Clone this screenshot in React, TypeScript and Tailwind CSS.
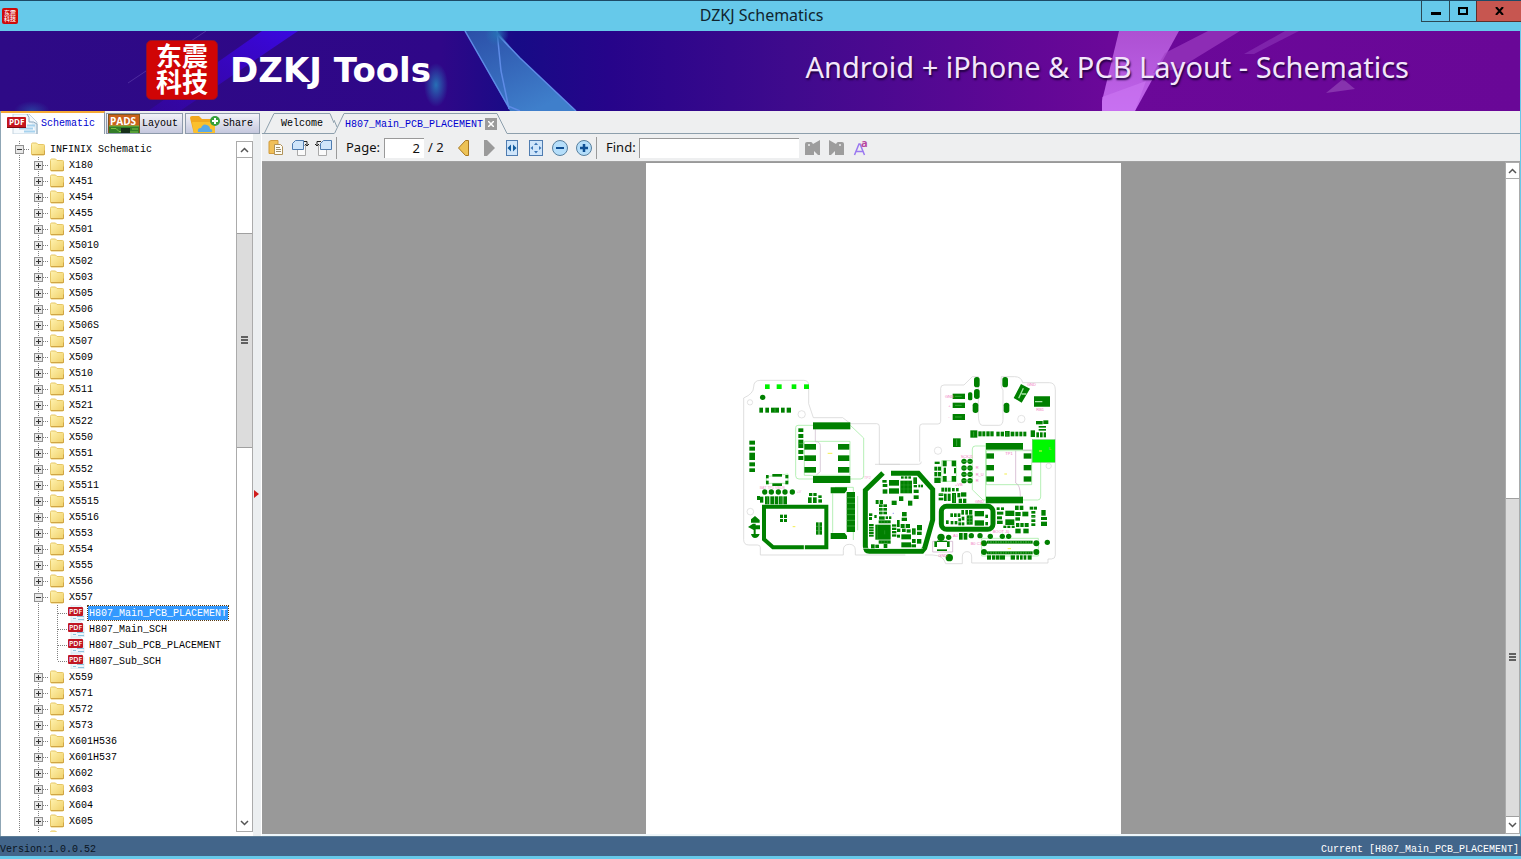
import { useState } from "react";
import type { ReactNode } from "react";

const FOLDERS_BEFORE = [
  "X180", "X451", "X454", "X455", "X501", "X5010", "X502", "X503", "X505", "X506", "X506S",
  "X507", "X509", "X510", "X511", "X521", "X522", "X550", "X551", "X552", "X5511", "X5515",
  "X5516", "X553", "X554", "X555", "X556",
];
const FILES = ["H807_Main_PCB_PLACEMENT", "H807_Main_SCH", "H807_Sub_PCB_PLACEMENT", "H807_Sub_SCH"];
const FOLDERS_AFTER = [
  "X559", "X571", "X572", "X573", "X601H536", "X601H537", "X602", "X603", "X604", "X605",
];

const mono = "font-['Liberation_Mono','Noto_Sans_CJK_SC',monospace] text-[10px]";

/* ---------- small icons ---------- */

function FolderIcon() {
  return (
    <svg width="14" height="14" viewBox="0 0 14 14" className="shrink-0">
      <defs>
        <linearGradient id="folder" x1="0" y1="0" x2="1" y2="1">
          <stop offset="0" stopColor="#fff3b0" />
          <stop offset="1" stopColor="#f0d069" />
        </linearGradient>
      </defs>
      <path d="M.5 2.500q0-1.500 1-1.500h4l1.500 1.500h5.500q1 0 1 1v8.500q0 1-1 1h-11q-1 0-1-1z" fill="url(#folder)" stroke="#e6c766" />
      <path d="M1 12.500h12.500v-4" fill="none" stroke="#d0a545" />
    </svg>
  );
}

function PdfIcon({ big = false }: { big?: boolean }) {
  return (
    <svg width={big ? 34 : 17} height={big ? 20 : 16} viewBox={big ? "0 0 34 20" : "0 0 17 16"} className="shrink-0">
      {big ? (
        <>
          <path d="M6 0h16l8 8v12H6z" fill="#f4f9fd" stroke="#c3d3df" />
          <path d="M20 0q3 3 2 8 5-1 8 2v10" fill="#dfebf4" stroke="#8fa9bd" />
          <path d="M12 14.500h14M17 17.500h11M20 11.500h8" stroke="#a6d2ee" strokeWidth="2" />
          <rect x="0" y="3" width="19" height="11" rx="1" fill="#c4141c" />
          <path d="M0 13.500h19" stroke="#7c0a10" />
          <text x="2" y="11" fontSize="8" fontWeight="700" fill="#fff" fontFamily="Open Sans, sans-serif">PDF</text>
        </>
      ) : (
        <>
          <path d="M3 0h9l4 4v12H3z" fill="#edf6fb" stroke="#cfdfe8" strokeWidth=".6" />
          <path d="M5 13.500h3M10 14.500h6M9 11.500h7" stroke="#8cc4de" />
          <rect x="0" y="2" width="15" height="9" rx="1" fill="#c01622" />
          <text x="1" y="9" fontSize="7" fontWeight="600" fill="#fff" fontFamily="Open Sans, sans-serif">PDF</text>
        </>
      )}
    </svg>
  );
}

function PadsIcon() {
  return (
    <svg width="32" height="20" viewBox="0 0 32 20" className="shrink-0">
      <rect width="32" height="20" fill="#fff" />
      <rect x=".5" y=".5" width="31" height="20" fill="#c9611a" stroke="#7f5520" />
      <rect x="1" y="12" width="30" height="8" fill="#327c28" />
      <path d="M1 12h30M3 14.500h5l3 3h3M24 15h6M19 18h11" stroke="#7bc142" fill="none" />
      <rect x="13" y="14" width="9" height="5" fill="#16301a" />
      <text x="2" y="11" fontSize="10" fontWeight="700" fill="#fff" fontFamily="Open Sans, sans-serif">PADS</text>
    </svg>
  );
}

function ShareIcon() {
  return (
    <svg width="34" height="20" viewBox="0 0 34 20" className="shrink-0">
      <path d="M1 4q0-2 2-2h7l3 3h10q2 0 2 2v13H5z" fill="#f2a81e" />
      <path d="M3 8h23v12H5z" fill="#fbc02d" />
      <path d="M9 18q-1-4 3-4 2-5 6-3 3 1 3 4 3 0 2 3z" fill="#5aa9e6" />
      <circle cx="26" cy="7" r="5" fill="#35a03a" />
      <path d="M26 4v6M23 7h6" stroke="#fff" strokeWidth="2" />
    </svg>
  );
}

function Seal({ small = false }: { small?: boolean }) {
  if (small) {
    return (
      <svg width="16" height="16" viewBox="0 0 16 16" className="overflow-visible">
        <rect width="16" height="16" rx="2" fill="#cf0a0a" />
        <g fontSize="6" fontWeight="500" fill="#fff" fontFamily="Noto Sans CJK SC, sans-serif">
          <text x="2" y="7">东震</text>
          <text x="2" y="13">科技</text>
        </g>
      </svg>
    );
  }
  return (
    <svg width="72" height="60" viewBox="0 0 72 60" className="shrink-0 overflow-visible">
      <rect x=".5" y=".5" width="71" height="59" rx="5" fill="#d00505" stroke="#8c1030" />
      <g fontSize="26" fontWeight="700" fill="#fff" fontFamily="Noto Sans CJK SC, sans-serif">
        <text x="10" y="26">东震</text>
        <text x="10" y="52">科技</text>
      </g>
    </svg>
  );
}

function Chevron({ up = false }: { up?: boolean }) {
  return (
    <svg width="9" height="6" viewBox="0 0 9 6">
      <path d={up ? "M1 5l3.500-3.500L8 5" : "M1 1l3.500 3.500L8 1"} fill="none" stroke="#555" strokeWidth="1.500" />
    </svg>
  );
}

/* ---------- banner ---------- */

function BannerArt() {
  return (
    <svg className="absolute inset-0 h-full w-full" viewBox="0 0 1520 80" preserveAspectRatio="none">
      <defs>
        <linearGradient id="bg">
          <stop offset="0" stopColor="#2e0a86" />
          <stop offset=".29" stopColor="#2f0788" />
          <stop offset=".34" stopColor="#170b86" />
          <stop offset=".4" stopColor="#26048a" />
          <stop offset=".52" stopColor="#3f0a8d" />
          <stop offset=".68" stopColor="#620796" />
          <stop offset=".73" stopColor="#6b0899" />
          <stop offset="1" stopColor="#690797" />
        </linearGradient>
        <linearGradient id="beam" x1="0" y1="1" x2="1" y2="0">
          <stop offset="0" stopColor="#3c00c8" stopOpacity=".3" />
          <stop offset="1" stopColor="#3a08e0" />
        </linearGradient>
        <linearGradient id="prism" x1="0" y1="0" x2=".6" y2="1">
          <stop offset="0" stopColor="#2b4fa8" />
          <stop offset="1" stopColor="#3f7fcb" />
        </linearGradient>
        <linearGradient id="pink" x1="0" y1="0" x2="0" y2="1">
          <stop offset="0" stopColor="#ad50d2" />
          <stop offset="1" stopColor="#c065ec" />
        </linearGradient>
        <radialGradient id="glow">
          <stop offset="0" stopColor="#276fb5" />
          <stop offset="1" stopColor="#276fb5" stopOpacity="0" />
        </radialGradient>
      </defs>
      <rect width="1520" height="80" fill="url(#bg)" />
      <path d="M148 80L262 0h36L180 80z" fill="url(#beam)" />
      <path d="M128 52L206 0" stroke="#6e4fb8" opacity=".5" />
      <ellipse cx="436" cy="54" rx="12" ry="22" fill="url(#glow)" />
      <ellipse cx="32" cy="80" rx="18" ry="10" fill="url(#glow)" opacity=".5" />
      <path d="M465 0h32l23 27 56 53h-66z" fill="url(#prism)" />
      <path d="M465 0l43 75 12 5M497 0l4 40 8 38M497 3l23 24 56 53" fill="none" stroke="#5e8be6" strokeWidth="1.500" />
      <circle cx="497" cy="3" r="12" fill="url(#glow)" />
      <path d="M1119 0h60l-44 80h-33v-10z" fill="url(#pink)" />
      <path d="M1102 66l44-16-11 30h-33z" fill="#d07cf5" opacity=".5" />
      <path d="M1208 0h32l-62 38-25 4 12-20z" fill="#a040c4" opacity=".65" />
      <path d="M1285 0h14l-45 23-10 0z" fill="#8c35b8" opacity=".6" />
      <path d="M1343 48l12 10-29 4z" fill="#8733ae" />
    </svg>
  );
}

/* ---------- tree ---------- */

function Guide({ half = false, branch = false, box }: { half?: boolean; branch?: boolean; box?: "+" | "-" }) {
  return (
    <svg width="19" height="16" viewBox="0 0 19 16" className="block shrink-0">
      <path d={half ? "M9.500 0V8" : "M9.500 0V16"} stroke="#808080" strokeDasharray="1 1" />
      {(branch || box) && <path d="M10 8.500h9" stroke="#808080" strokeDasharray="1 1" />}
      {box && (
        <>
          <rect x="5.500" y="4.500" width="8" height="8" fill="#e8e8e8" stroke="#919191" />
          <path d={box === "+" ? "M7 8.500h5M9.500 6v5" : "M7 8.500h5"} stroke="#333" />
        </>
      )}
    </svg>
  );
}

function Row({ name, depth, open = false, onToggle }: { name: string; depth: number; open?: boolean; onToggle?: () => void }) {
  return (
    <li className="flex h-4 items-center">
      {depth > 0 && <Guide />}
      <button type="button" aria-label="Toggle folder" onClick={onToggle} className="shrink-0">
        <Guide box={open ? "-" : "+"} />
      </button>
      <span className="flex w-[19px] shrink-0 pl-[2px]">
        <FolderIcon />
      </span>
      {name && <button type="button" className="px-[2px] pt-[2px] leading-[14px] whitespace-nowrap">{name}</button>}
    </li>
  );
}

function Tree({ selected, onSelect }: { selected: string; onSelect: (name: string) => void }) {
  const [open, setOpen] = useState(true);
  return (
    <ul className={`min-w-0 flex-1 overflow-hidden pl-[9px] text-black ${mono}`}>
      <Row name="INFINIX Schematic" depth={0} open />
      {FOLDERS_BEFORE.map((name) => (
        <Row key={name} name={name} depth={1} />
      ))}
      <Row name="X557" depth={1} open={open} onToggle={() => setOpen(!open)} />
      {open &&
        FILES.map((name, i) => (
          <li key={name} className="flex h-4 items-center">
            <Guide />
            <Guide />
            <Guide branch half={i === FILES.length - 1} />
            <span className="flex w-5 shrink-0 pl-px">
              <PdfIcon />
            </span>
            <button
              type="button"
              onClick={() => onSelect(name)}
              className={
                name === selected
                  ? "h-4 border border-dotted border-[#5a3a10] bg-[#3399ff] bg-clip-padding px-px pt-px leading-[13px] whitespace-nowrap text-white"
                  : "px-[2px] pt-[2px] leading-[14px] whitespace-nowrap"
              }
            >
              {name}
            </button>
          </li>
        ))}
      {FOLDERS_AFTER.map((name) => (
        <Row key={name} name={name} depth={1} />
      ))}
      <Row name="" depth={1} />
    </ul>
  );
}

/* above / thumb / below share the track as flex weights */
function ScrollBar({ above, thumb, below }: { above: number; thumb: number; below: number }) {
  return (
    <div className="flex w-full flex-col border border-[#ababab] bg-white">
      <button type="button" aria-label="Scroll up" className="flex h-4 shrink-0 items-center justify-center border-b border-[#ababab]">
        <Chevron up />
      </button>
      <div style={{ flex: `${above} 1 0px` }} />
      <div
        className="flex flex-col items-center justify-center gap-px border-y border-[#a0a0a0] bg-[#dcdcdc]"
        style={{ flex: `${thumb} 1 0px` }}
      >
        <span className="h-[2px] w-[7px] bg-[#606060]" />
        <span className="h-[2px] w-[7px] bg-[#606060]" />
        <span className="h-[2px] w-[7px] bg-[#606060]" />
      </div>
      <div style={{ flex: `${below} 1 0px` }} />
      <button type="button" aria-label="Scroll down" className="flex h-4 shrink-0 items-center justify-center">
        <Chevron />
      </button>
    </div>
  );
}

/* ---------- board drawing ---------- */

type Box = [number, number, number, number];

const LEFT_PADS: Box[] = [
  [73, 113, 11, 15], [91, 113, 11, 15], [108, 113, 24, 15], [138, 113, 11, 15], [155, 113, 13, 15],
  [43, 212, 17, 12], [43, 230, 17, 12], [43, 248, 17, 22], [43, 277, 17, 12], [43, 295, 17, 11],
  [190, 175, 15, 11], [190, 192, 15, 12], [190, 209, 15, 25], [190, 240, 15, 12], [190, 258, 15, 12],
  [208, 222, 35, 17], [208, 256, 35, 17], [208, 291, 35, 17],
  [309, 222, 34, 17], [309, 256, 34, 17], [309, 291, 34, 17],
  [234, 157, 112, 21], [234, 318, 112, 21],
  [112, 312, 29, 8], [112, 340, 29, 8], [93, 315, 8, 10], [93, 332, 8, 11], [151, 315, 9, 10], [151, 332, 9, 11],
  [335, 366, 25, 120],
  [66, 378, 9, 12], [75, 380, 10, 18], [90, 379, 13, 24], [106, 379, 11, 24], [119, 379, 11, 24], [132, 379, 11, 24], [145, 379, 11, 24],
  [222, 369, 10, 9], [235, 369, 10, 9], [219, 382, 11, 17], [234, 382, 11, 17], [250, 376, 10, 8], [250, 388, 11, 10],
  [135, 434, 9, 10], [147, 434, 9, 10], [135, 447, 9, 9], [147, 447, 9, 9],
  [243, 457, 8, 37], [253, 457, 8, 37],
];

const RIGHT_PADS: Box[] = [
  [173, 71, 37, 16], [173, 98, 37, 16], [173, 132, 37, 18],
  [273, 219, 111, 20], [273, 380, 111, 20],
  [274, 250, 23, 16], [274, 285, 23, 16], [274, 319, 23, 16],
  [386, 250, 23, 16], [386, 285, 23, 16], [386, 319, 23, 16],
  [174, 205, 23, 26],
  [226, 181, 21, 22], [250, 184, 10, 15], [262, 184, 9, 15], [274, 184, 10, 15], [286, 184, 10, 15],
  [304, 185, 10, 14], [317, 185, 10, 14], [330, 183, 14, 17], [347, 185, 11, 14], [361, 185, 9, 14], [373, 185, 9, 14], [385, 185, 9, 14], [407, 181, 13, 20],
  [424, 187, 8, 15], [435, 187, 8, 15], [446, 187, 7, 15], [431, 168, 22, 5], [431, 177, 22, 5],
  [423, 153, 20, 10], [445, 151, 15, 11],
  [119, 275, 15, 7], [118, 290, 9, 12], [129, 290, 9, 12], [118, 306, 9, 13], [129, 306, 9, 13], [118, 323, 19, 16],
  [143, 272, 12, 17], [170, 272, 13, 17], [143, 318, 12, 17], [170, 318, 13, 17], [146, 293, 7, 18], [177, 294, 6, 16],
  [139, 353, 8, 12], [149, 353, 8, 12], [159, 353, 8, 12], [171, 354, 8, 10], [183, 354, 8, 10],
  [131, 370, 14, 8], [131, 383, 14, 8], [147, 371, 8, 22], [158, 371, 9, 22], [171, 369, 12, 30], [187, 369, 9, 13], [198, 367, 16, 13], [191, 386, 10, 13], [204, 386, 10, 13],
  [239, 423, 28, 16], [239, 451, 28, 16], [166, 430, 8, 11], [177, 430, 8, 11], [188, 430, 8, 11], [199, 420, 8, 14], [211, 420, 8, 14], [222, 420, 10, 14],
  [153, 451, 8, 11], [167, 453, 8, 10], [179, 453, 8, 10], [190, 445, 8, 9], [200, 440, 8, 11], [190, 457, 8, 9], [200, 457, 8, 9], [215, 436, 18, 28], [271, 434, 8, 10], [271, 456, 8, 10],
  [305, 412, 9, 8], [318, 412, 9, 8], [306, 425, 19, 9], [306, 439, 15, 9], [306, 452, 17, 10],
  [331, 422, 27, 16], [331, 448, 27, 17], [325, 467, 9, 7], [337, 467, 9, 7], [350, 467, 9, 7],
  [360, 407, 11, 13], [374, 407, 11, 13], [361, 426, 16, 12], [382, 425, 18, 14], [361, 442, 14, 10], [363, 459, 10, 12], [376, 459, 10, 12], [389, 459, 12, 12], [361, 476, 16, 14], [385, 476, 16, 14],
  [404, 410, 10, 9], [416, 410, 10, 9], [409, 423, 12, 8], [409, 435, 12, 8], [409, 448, 12, 8], [409, 460, 12, 8], [439, 420, 13, 17], [438, 441, 18, 9], [438, 455, 18, 13],
  [192, 489, 11, 20], [206, 489, 11, 20],
  [276, 512, 137, 9], [276, 544, 137, 9],
  [118, 514, 8, 17], [156, 514, 8, 17], [126, 512, 30, 4], [126, 538, 30, 5],
  [276, 556, 12, 13], [291, 556, 10, 13], [303, 556, 10, 13], [314, 556, 16, 13], [347, 556, 13, 13], [364, 556, 8, 13], [375, 556, 8, 13], [386, 556, 8, 13], [398, 556, 12, 13],
];

const CORE_PADS: Box[] = [
  [61, 45, 13, 8], [62, 57, 14, 9], [62, 73, 14, 13], [81, 45, 30, 17], [81, 70, 30, 16],
  [115, 47, 35, 38], [117, 34, 8, 7], [128, 34, 8, 7], [139, 34, 8, 7], [154, 37, 11, 20], [155, 60, 10, 7], [169, 59, 6, 8], [177, 59, 6, 8], [155, 74, 15, 10], [155, 91, 15, 11],
  [111, 94, 13, 14], [89, 107, 15, 13], [138, 107, 13, 15], [41, 105, 9, 12], [53, 105, 10, 12],
  [51, 118, 11, 8], [64, 118, 11, 8], [51, 129, 11, 8], [64, 129, 11, 8], [51, 140, 11, 8], [64, 140, 11, 8], [51, 154, 17, 10], [71, 154, 7, 8], [81, 154, 7, 8],
  [21, 145, 10, 8], [21, 156, 9, 9], [37, 150, 7, 9], [120, 141, 14, 13], [119, 158, 16, 10],
  [40, 179, 46, 45], [21, 177, 14, 6], [21, 185, 14, 6], [21, 193, 14, 6], [21, 201, 14, 6], [21, 209, 14, 6],
  [50, 166, 36, 9], [50, 226, 36, 10], [90, 178, 13, 7], [90, 188, 13, 7], [90, 198, 13, 7], [90, 208, 13, 7],
  [105, 165, 8, 21], [116, 177, 12, 12], [131, 177, 13, 12], [105, 191, 10, 10], [120, 191, 11, 10], [134, 193, 12, 10],
  [118, 208, 29, 15], [118, 232, 29, 15], [150, 190, 11, 19], [165, 180, 15, 16], [165, 200, 14, 10], [150, 222, 11, 12], [165, 222, 13, 14], [148, 238, 14, 9], [105, 209, 9, 9],
  [27, 238, 11, 12], [40, 239, 11, 10], [65, 237, 11, 12],
];

function Pads({ boxes }: { boxes: Box[] }) {
  return (
    <>
      {boxes.map(([x, y, w, h], i) => (
        <rect key={i} x={x} y={y} width={w} height={h} />
      ))}
    </>
  );
}

const seam = { stroke: "#52b852", strokeWidth: 2, fill: "none" };

function Board() {
  return (
    <svg className="block w-full" viewBox="646 370 475 200">
      {/* left half */}
      <g transform="translate(735 370) scale(.33333)">
        <path
          d="M76 31h130q15 0 15 15v55l14 42h88l24 18h78q8 0 8 8v114h62M76 31q-20 0-20 20t-30 33v425q0 16 16 16h26q8 0 8 8v22h249v-14q0-18 18-18t18 18v14h150"
          fill="none" stroke="#cfcfcf" strokeWidth="2"
        />
        <g fill="none" stroke="#d4d4d4" strokeWidth="2">
          <circle cx="45" cy="97" r="8" />
          <circle cx="200" cy="133" r="11" />
          <circle cx="46" cy="425" r="10" />
        </g>
        <g fill="none" stroke="#93e893" strokeWidth="2">
          <path d="M234 166h-45q-7 0-7 7v144q0 10 10 10h42M346 166l40 38v113q0 10-10 10h-30" />
          <path d="M208 214h137v102H208zM293 370v118M300 352h55v158M368 378v103M94 320v20h65v-28z" />
        </g>
        <path d="M241 178v37q15 0 15 12v78l-12 10" fill="none" stroke="#c9b6c9" strokeWidth="2" />
        <g fill="#00f000">
          <rect x="90" y="43" width="14" height="14" />
          <rect x="125" y="43" width="15" height="14" />
          <rect x="170" y="43" width="14" height="14" />
          <rect x="207" y="43" width="15" height="14" />
        </g>
        <g fill="#008000">
          <circle cx="83" cy="82" r="8" />
          <Pads boxes={LEFT_PADS} />
          <path d="M287 352h49v9l-7 9h-42zM287 489h42l7 9v9h-49z" />
          {[89, 109, 130, 150, 172].map((cx) => (
            <circle key={cx} cx={cx} cy="366" r="8" />
          ))}
          <path d="M48 448l12-10 14 12v8H48zM39 471l15-10h8v5h13v12H62v14h12q-4 12-14 12-9 0-12-12h8v-12z" />
        </g>
        <path d="M87 410h187v122H114l-27-24z" fill="none" stroke="#008000" strokeWidth="12" />
        <path d="M208 522v18" stroke="#fff" strokeWidth="3" />
        <path d="M190 221h15M335 383h25M335 400h25M335 417h25M335 434h25M335 451h25M335 468h25M243 469h18M243 482h18M97 380v22M138 380v22M120 115v12" {...seam} />
        <g fill="#f2a2cf" fontSize="11" fontFamily="Liberation Sans, sans-serif">
          <text x="74" y="357">BAT TP1 VBUS</text>
          <text x="185" y="368">+V</text>
          <text x="387" y="327">TP2</text>
        </g>
        <path d="M278 250h14M173 470h8" stroke="#f3ee4e" strokeWidth="3" />
      </g>

      {/* right half */}
      <g transform="translate(895 370) scale(.33333)">
        <path
          d="M-60 283H71q8 0 8-8M74 275V170q0-8 8-8h47q8 0 8-8V55q0-10 10-10h60l25-25h18v112q0 34 12 34h50q12 0 12-18V60q-8-8-5-40h40q20 0 24 18h80q18 0 18 22v495q0 12-12 12h-10v12H230v-18q0-16-14-16t-14 16v20h-50q-6-25-40-26H90"
          fill="none" stroke="#cfcfcf" strokeWidth="2"
        />
        <g fill="none" stroke="#d4d4d4" strokeWidth="2">
          <circle cx="379" cy="147" r="11" />
          <circle cx="129" cy="242" r="11" />
          <circle cx="461" cy="288" r="8" />
        </g>
        <g fill="none" stroke="#93e893" strokeWidth="2">
          <path d="M273 228h-32q-9 0-9 9v122l32 31h9M384 390h44q9 0 9-9V275M274 242h136v102H274zM272 219v181" />
          <path d="M260 505h170v53H260zM140 272h44v62h-44z" />
        </g>
        <path d="M362 242v97q14 5 14 40M383 240h28M113 514h60v32h-60z" fill="none" stroke="#c9a6c4" strokeWidth="2" />
        <g fill="#008000">
          <Pads boxes={RIGHT_PADS} />
          <rect x="237" y="21" width="17" height="31" rx="8" />
          <rect x="237" y="57" width="17" height="30" rx="8" />
          <rect x="233" y="98" width="17" height="31" rx="8" />
          <rect x="322" y="21" width="17" height="31" rx="8" />
          <rect x="326" y="98" width="17" height="31" rx="8" />
          <rect x="219" y="67" width="13" height="24" rx="5" />
          <path d="M378 42l27 14-25 42-24-14zM417 79h48v31h-48z" />
          {[207, 225].map((cx) => [274, 294, 313, 332].map((cy) => <circle key={cx + "-" + cy} cx={cx} cy={cy} r="8" />))}
          <circle cx="138" cy="502" r="11" />
          <circle cx="161" cy="502" r="8" />
          <circle cx="229" cy="497" r="8" />
          <circle cx="255" cy="497" r="8" />
          <circle cx="286" cy="499" r="8" />
          <circle cx="322" cy="499" r="8" />
          <circle cx="341" cy="499" r="8" />
          <circle cx="457" cy="517" r="8" />
          <circle cx="163" cy="563" r="11" />
          <circle cx="267" cy="520" r="9" />
          <circle cx="267" cy="546" r="9" />
          <circle cx="424" cy="520" r="9" />
          <circle cx="424" cy="546" r="9" />
        </g>
        <rect x="139" y="409" width="155" height="69" rx="16" fill="none" stroke="#008000" strokeWidth="15" />
        <rect x="412" y="209" width="68" height="68" fill="#00f800" stroke="#49a349" />
        <path d="M371 85l14-30M380 72h14M420 95h22" stroke="#a5e6a5" strokeWidth="4" />
        <path d="M180 79h20M180 106h20M180 141h20M185 208v20M236 185v15M215 446h18M215 455h18M224 436v28M131 374h14M178 372v25M336 185v14M409 439h12M202 274h28M202 294h28M202 313h28M202 332h28" {...seam} />
        <path d="M280 516h130M280 548h130" stroke="#6fc06f" strokeWidth="7" strokeDasharray="1 4" />
        <g fill="#f07cc0" fontSize="12" fontFamily="Liberation Sans, sans-serif">
          <text x="150" y="84">GND</text>
          <text x="160" y="110">+</text>
          <text x="160" y="143">-</text>
          <text x="396" y="48">GND</text>
          <text x="424" y="122">RB1</text>
          <text x="197" y="263">SCKJ1</text>
          <text x="242" y="298">R</text>
          <text x="242" y="318">R_U</text>
          <text x="242" y="336">R</text>
          <text x="240" y="398">GND</text>
          <text x="331" y="255">TP1</text>
          <text x="180" y="348">+VB</text>
          <text x="174" y="501">A0</text>
          <text x="293" y="490">BOOT J0</text>
          <text x="130" y="560">GND</text>
          <text x="227" y="525">B0 C1</text>
          <text x="462" y="240">L</text>
        </g>
        <g fill="none" stroke="#f3ee4e" strokeWidth="3">
          <path d="M328 312h8M338 536h10M432 243h9" />
        </g>
      </g>

      {/* shielded core */}
      <g transform="translate(862 465) scale(.33333)">
        <path d="M63 24L10 76v167q0 16 12 16h158l8-10 24-84V73l-43-48H87" fill="none" stroke="#008000" strokeWidth="15" />
        <path d="M2 250h180" stroke="#fff" strokeWidth="2" />
        <g fill="#008000">
          <Pads boxes={CORE_PADS} />
        </g>
        <path d="M126 48v36M138 48v36M115 60h35M115 72h35M57 119v36M46 180v46M58 167v8M67 167v8M76 167v8M58 227v9M67 227v9M76 227v9M159 40v16M155 194v13M68 196v12" {...seam} strokeWidth="1" />
        <path d="M92 145h4" stroke="#9d9df0" strokeWidth="3" />
      </g>
    </svg>
  );
}

/* ---------- toolbar ---------- */

function ToolButton({ label, children }: { label: string; children: ReactNode }) {
  return (
    <button type="button" aria-label={label} className="flex h-6 w-6 shrink-0 items-center justify-center">
      <svg width="18" height="18" viewBox="0 0 18 18" className="overflow-visible">{children}</svg>
    </button>
  );
}

const sheet = { fill: "#cfe5fa", stroke: "#4f7cb0" };

function Toolbar() {
  const [page, setPage] = useState("2");
  const [find, setFind] = useState("");
  return (
    <div className="flex h-7 shrink-0 items-center border-b border-[#a0a0a0] bg-[#eeeff0] pl-[2px] font-['Noto_Sans','Open_Sans',sans-serif] text-[13px] text-[#111]">
      <ToolButton label="Copy">
        <path d="M2 2.500l2-1h7v13H2z" fill="#f0bf58" stroke="#d19b3d" />
        <path d="M7.500 5.500h6l2 2v8h-8z" fill="#fffdf5" stroke="#b09258" />
        <path d="M9 8.500h4M9 10.500h5M9 12.500h5" stroke="#9d9070" />
      </ToolButton>
      <ToolButton label="Rotate right">
        <path d="M6.500 6.500h8v10h-8z" fill="#fafafa" stroke="#aaa" />
        <path d="M4.500 1.500h8v9h-11v-6z" {...sheet} />
        <path d="M13 2.500h3v4M14 5l2 2 2-2" fill="none" stroke="#222" />
      </ToolButton>
      <ToolButton label="Rotate left">
        <path d="M3.500 6.500h8v10h-8z" fill="#fafafa" stroke="#aaa" />
        <path d="M8.500 1.500h8v9h-11v-6z" {...sheet} />
        <path d="M6 2.500H2v4M0 5l2 2 2-2" fill="none" stroke="#222" />
      </ToolButton>
      <span className="h-[22px] w-px shrink-0 bg-[#9a9a9a]" />
      <label htmlFor="page" className="ml-[9px] w-[38px] shrink-0">Page:</label>
      <input
        id="page"
        value={page}
        onChange={(e) => setPage(e.target.value)}
        className="h-5 w-10 border-t border-l border-[#999] bg-white pr-1 text-right outline-none"
      />
      <span className="ml-1 w-6 shrink-0 whitespace-nowrap">/ 2</span>
      <ToolButton label="Previous page">
        <path d="M13.500 1.500v15h-3L3.500 9l7-7.500z" fill="#edc255" stroke="#a87820" />
      </ToolButton>
      <ToolButton label="Next page">
        <path d="M5 1h3l8 8-8 8H5z" fill="#9a9a9a" />
      </ToolButton>
      <ToolButton label="Fit width">
        <rect x="3.500" y="1.500" width="11" height="15" {...sheet} />
        <path d="M8 5.500v7L4.500 9zM10 5.500v7L13.500 9z" fill="#125c9e" />
      </ToolButton>
      <ToolButton label="Fit page">
        <rect x="2.500" y="1.500" width="13" height="15" {...sheet} />
        <path d="M7 6l2-2.500L11 6zM7 12l2 2.500 2-2.500zM6 7L3.500 9 6 11zM12 7l2.500 2-2.500 2z" fill="#3c76b6" />
      </ToolButton>
      <ToolButton label="Zoom out">
        <circle cx="9" cy="9" r="7.500" fill="#b5defa" stroke="#57809f" />
        <path d="M5 9h8" stroke="#0e4f94" strokeWidth="2" />
      </ToolButton>
      <ToolButton label="Zoom in">
        <circle cx="9" cy="9" r="7.500" fill="#b5defa" stroke="#57809f" />
        <path d="M5 9h8M9 5v8" stroke="#0e4f94" strokeWidth="2.500" />
      </ToolButton>
      <span className="h-[22px] w-px shrink-0 bg-[#9a9a9a]" />
      <label htmlFor="find" className="ml-[9px] w-[33px] shrink-0">Find:</label>
      <input
        id="find"
        value={find}
        onChange={(e) => setFind(e.target.value)}
        className="h-5 w-40 border-t border-l border-[#999] bg-white px-1 outline-none"
      />
      <div className="flex gap-px pl-px">
        <ToolButton label="Find previous">
          <path d="M2 5q0-2 2-2h4q1 0 2 2l7-4v15h-2l-4-4v4H2z" fill="#9d9d9d" />
          <circle cx="6" cy="6" r="1" fill="#eee" />
        </ToolButton>
        <ToolButton label="Find next">
          <path d="M16 5q0-2-2-2h-4q-1 0-2 2L1 1v15h2l4-4v4h9z" fill="#9d9d9d" />
          <circle cx="12" cy="6" r="1" fill="#eee" />
        </ToolButton>
        <ToolButton label="Match case">
          <path d="M1.500 16L6 5h1l4.500 11M3 12.500h7" fill="none" stroke="#9a78f0" strokeWidth="1.500" />
          <text x="8" y="8" fontSize="11" fontWeight="700" fill="#b8459f" fontFamily="Open Sans, sans-serif">a</text>
        </ToolButton>
      </div>
    </div>
  );
}

export default function App() {
  const [selected, setSelected] = useState(FILES[0]);

  return (
    <div className="flex h-screen flex-col overflow-hidden border-t border-[#1d4a66] bg-[#66c9ea]">
      {/* title bar */}
      <header className="flex h-[30px] shrink-0 items-center">
        <div className="flex flex-1 pl-[2px]">
          <Seal small />
        </div>
        <h1 className="pb-[2px] font-['Noto_Sans','Open_Sans',sans-serif] text-base text-[#10242e]">DZKJ Schematics</h1>
        <div className="flex flex-1 justify-end self-start">
          <button type="button" aria-label="Minimize" className="flex h-[21px] w-[29px] items-center justify-center border border-t-0 border-[#2b4753]">
            <span className="mt-1 h-[3px] w-[10px] bg-black" />
          </button>
          <button type="button" aria-label="Maximize" className="flex h-[21px] w-[26px] items-center justify-center border-b border-[#2b4753]">
            <span className="h-2 w-[10px] border-2 border-black" />
          </button>
          <button type="button" aria-label="Close" className="flex h-[21px] w-[45px] items-center justify-center border-b border-l border-[#5e2f2b] bg-[#c75650]">
            <svg width="9" height="8" viewBox="0 0 9 8">
              <path d="M1 0l7 8M8 0L1 8" stroke="#000" strokeWidth="2" />
            </svg>
          </button>
        </div>
      </header>

      <div className="flex min-h-0 flex-1 flex-col pr-px">
        {/* banner */}
        <div className="relative flex h-20 shrink-0 items-center justify-between overflow-hidden">
          <BannerArt />
          <div className="relative flex items-center gap-3 pb-[2px] pl-[146px]">
            <Seal />
            <span className="font-['DejaVu_Sans','Noto_Sans',sans-serif] text-[34px] leading-none font-bold text-white">DZKJ Tools</span>
          </div>
          <span className="relative pr-[111px] pb-[10px] font-['Noto_Sans','Open_Sans',sans-serif] text-[29px] leading-none text-[#f3e6fb] [text-shadow:1px_2px_2px_#200040]">
            Android + iPhone &amp; PCB Layout - Schematics
          </span>
        </div>

        <div className="flex min-h-0 flex-1 bg-[#eeeff0]">
          {/* sidebar */}
          <aside className="flex w-[262px] shrink-0 flex-col border-l border-[#8fa6b5]">
            <div className={`flex h-[23px] shrink-0 items-end ${mono}`}>
              <button type="button" className="flex h-[23px] w-[104px] items-center overflow-hidden border-t-2 border-r border-t-[#f5a933] border-r-[#8d9aab] bg-white pl-[6px] text-[#0000d0]">
                <PdfIcon big />
                Schematic
              </button>
              <button type="button" className="ml-px flex h-[21px] w-[77px] items-center gap-[2px] overflow-hidden border border-[#8d9aab] bg-linear-to-b from-[#f3f3f8] to-[#c5c8de] pl-px text-black">
                <PadsIcon />
                Layout
              </button>
              <button type="button" className="ml-[2px] flex h-[21px] w-[75px] items-center overflow-hidden border border-[#8d9aab] bg-linear-to-b from-[#f3f3f8] to-[#c5c8de] pl-[3px] text-black">
                <ShareIcon />
                Share
              </button>
            </div>
            <div className="flex min-h-0 flex-1">
              <div className="flex min-w-0 flex-1 bg-white pt-[7px] pb-[4px]">
                <Tree selected={selected} onSelect={setSelected} />
                <div className="flex w-[17px] shrink-0">
                  <ScrollBar above={75} thumb={213} below={368} />
                </div>
              </div>
              <div className="flex w-[9px] shrink-0 items-center border-r border-white bg-[#eceff1] pt-[18px]">
                <svg width="6" height="8" viewBox="0 0 6 8">
                  <path d="M1 0l5 4-5 4z" fill="#d01c1c" />
                </svg>
              </div>
            </div>
          </aside>

          {/* viewer */}
          <main className="flex min-w-0 flex-1 flex-col">
            <div className={`flex h-[23px] shrink-0 items-end border-b border-[#8d9fac] pl-[2px] ${mono}`}>
              <button type="button" className="flex h-5 items-center text-black">
                <svg width="11" height="20" viewBox="0 0 11 20"><path d="M.5 20L10 .5h1" fill="none" stroke="#8d9fac" /></svg>
                <span className="flex h-5 items-center border-t border-[#8d9fac] px-[6px]">Welcome</span>
                <svg width="5" height="20" viewBox="0 0 5 20"><path d="M0 .5h1L5 10" fill="none" stroke="#8d9fac" /></svg>
              </button>
              <div className="-mb-px flex h-[21px] items-center bg-[#eeeff0] text-[#0000d0]">
                <svg width="11" height="21" viewBox="0 0 11 21"><path d="M0 7l3 7M.5 20.500L10 .5h1" fill="none" stroke="#8d9fac" /></svg>
                <button type="button" className="flex h-[21px] items-center border-t border-[#8d9fac] whitespace-nowrap">
                  {selected}
                </button>
                <div className="flex h-[21px] items-center border-t border-[#8d9fac] pl-[2px]">
                  <button type="button" aria-label="Close tab" className="flex h-3 w-3 items-center justify-center bg-[#9b9b9b]">
                    <svg width="6" height="6" viewBox="0 0 6 6"><path d="M0 0l6 6M6 0L0 6" stroke="#fff" strokeWidth="1.500" /></svg>
                  </button>
                </div>
                <svg width="11" height="21" viewBox="0 0 11 21"><path d="M0 .5l10 20h1" fill="none" stroke="#8d9fac" /></svg>
              </div>
            </div>
            <Toolbar />
            <div className="flex min-h-0 flex-1">
              <div className="flex min-w-0 flex-1 justify-center bg-[#999] pt-px">
                <div className="w-[475px] bg-white pt-[207px]">
                  <Board />
                </div>
              </div>
              <div className="flex w-[15px] shrink-0">
                <ScrollBar above={320} thumb={319} below={0} />
              </div>
            </div>
            <div className="h-[2px] shrink-0 bg-[#eef6fa]" />
          </main>
        </div>
      </div>

      {/* status bar */}
      <footer className={`flex h-5 shrink-0 items-end justify-between border-t border-[#5d7d96] bg-[#42658a] pr-[2px] leading-[13px] ${mono}`}>
        <span className="text-[#0a1420]">Version:1.0.0.52</span>
        <span className="text-white">Current [{selected}]</span>
      </footer>
      <div className="h-[3px] shrink-0 bg-[#66c9ea]" />
    </div>
  );
}
